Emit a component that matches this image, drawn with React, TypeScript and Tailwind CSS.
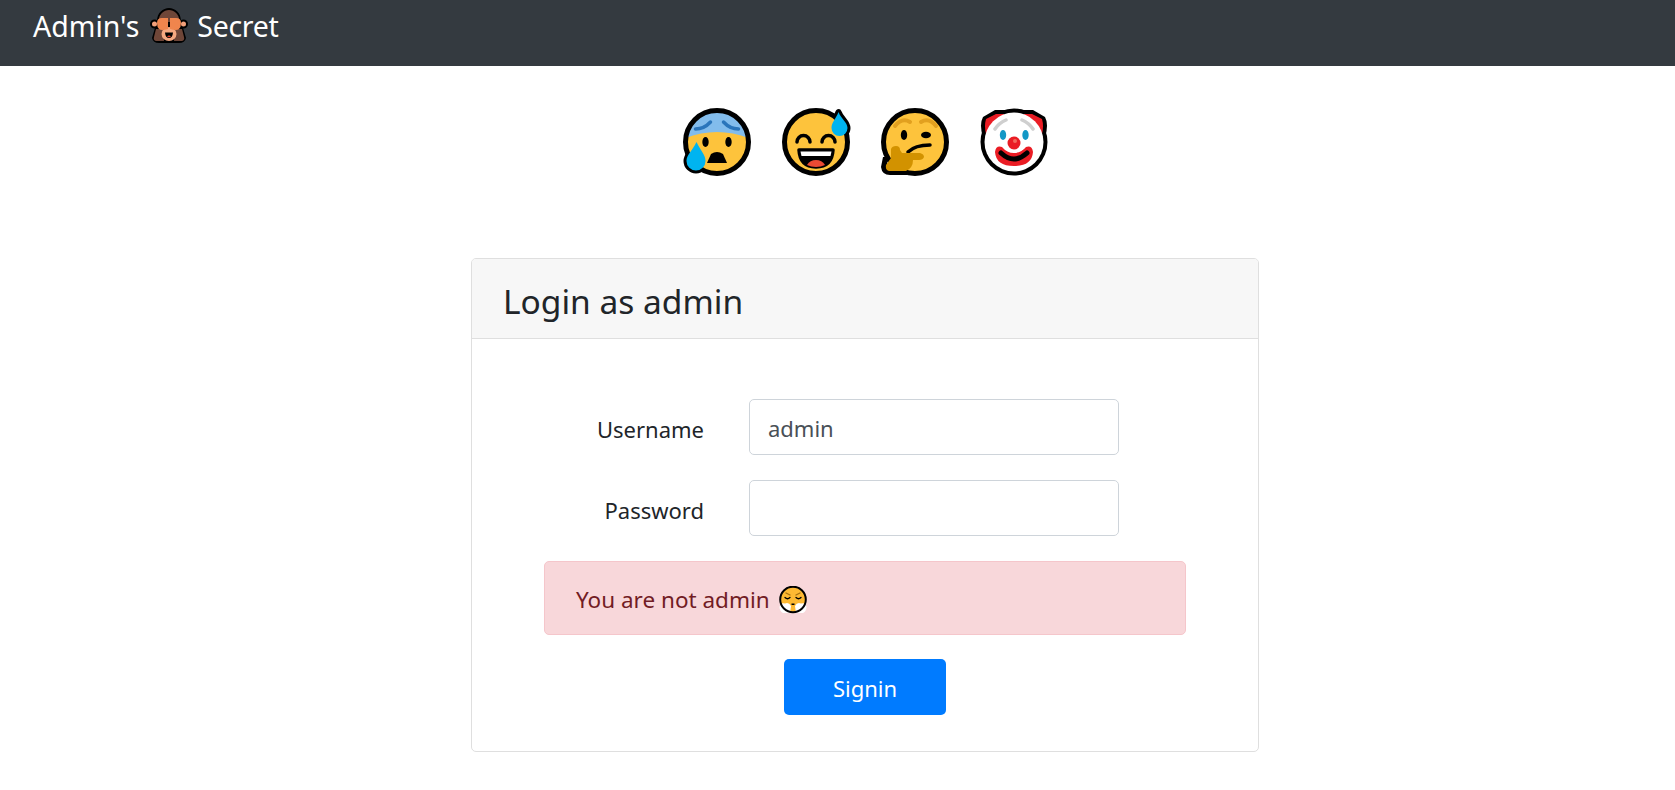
const FACE = "#fdc33c";
const DROP = "#00b4f0";

function ColdSweat() {
  const drop = "M19.500 40C15 49 9.500 53 9.500 59A9.500 9.500 0 0 0 28.500 59C28.500 53 24 49 19.500 40Z";
  return (
    <svg width="80" height="80" viewBox="0 0 80 80" className="shrink-0">
      <defs>
        <clipPath id="cold-face">
          <circle cx="40" cy="40" r="31.500" />
        </clipPath>
        <clipPath id="cold-outside">
          <path clipRule="evenodd" d="M0 0H80V80H0Z M8.500 40A31.500 31.500 0 0 0 71.500 40A31.500 31.500 0 0 0 8.500 40Z" />
        </clipPath>
      </defs>
      <circle cx="40" cy="40" r="31.500" fill={FACE} />
      <g clipPath="url(#cold-face)">
        <path d="M6 6H74V37Q40 23 6 37Z" fill="#82bcec" />
      </g>
      <circle cx="40" cy="40" r="31.500" fill="none" stroke="#000" strokeWidth="5" />
      <path d="M18.500 27Q27 27 33.500 20M61.500 27Q53 27 46.500 20" fill="none" stroke="#2a75bb" strokeWidth="3.500" strokeLinecap="round" />
      <ellipse cx="28.500" cy="40" rx="3.200" ry="5" fill="#000" />
      <ellipse cx="51.500" cy="40" rx="3.200" ry="5" fill="#000" />
      <path d="M30 61L34 52Q40 48 46 52L50 61Z" fill="#000" />
      <g clipPath="url(#cold-outside)">
        <path d={drop} fill="#000" stroke="#000" strokeWidth="6" strokeLinejoin="round" />
      </g>
      <path d={drop} fill={DROP} />
    </svg>
  );
}

function SweatSmile() {
  const drop = "M62.500 10C60 17 55.500 20 55.500 26A8 8 0 0 0 71.500 26C71.500 20 65 17 62.500 10Z";
  return (
    <svg width="80" height="80" viewBox="0 0 80 80" className="shrink-0">
      <defs>
        <clipPath id="sweat-outside">
          <path clipRule="evenodd" d="M0 0H80V80H0Z M8.500 40A31.500 31.500 0 0 0 71.500 40A31.500 31.500 0 0 0 8.500 40Z" />
        </clipPath>
      </defs>
      <circle cx="40" cy="40" r="31.500" fill={FACE} stroke="#000" strokeWidth="5" />
      <path d="M21 40A6.500 6.500 0 0 1 34 40M46 40A6.500 6.500 0 0 1 59 40" fill="none" stroke="#000" strokeWidth="3.500" strokeLinecap="round" />
      <path d="M23 48H57Q56 65 40 65Q24 65 23 48Z" fill="#000" stroke="#000" strokeWidth="3.500" strokeLinejoin="round" />
      <path d="M24.500 49.500H55.500L54.500 54H25.500Z" fill="#fff" />
      <path d="M31 63Q34 58 40 58Q46 58 49 63Q45 65 40 65Q35 65 31 63Z" fill="#ea4a34" />
      <g clipPath="url(#sweat-outside)">
        <path d={drop} fill="#000" stroke="#000" strokeWidth="6" strokeLinejoin="round" />
      </g>
      <path d={drop} fill={DROP} />
    </svg>
  );
}

function Thinking() {
  return (
    <svg width="80" height="80" viewBox="0 0 80 80" className="shrink-0">
      <circle cx="40" cy="40" r="31.500" fill={FACE} stroke="#000" strokeWidth="5" />
      <path d="M20 24Q27 15 35 20M46 20Q54 15 61 24" fill="none" stroke="#e2a01f" strokeWidth="4" strokeLinecap="round" />
      <ellipse cx="29" cy="33" rx="3.200" ry="5" fill="#000" />
      <ellipse cx="51" cy="33" rx="5" ry="3.200" fill="#000" />
      <path d="M33 50Q40 43 55 43" fill="none" stroke="#000" strokeWidth="3.500" strokeLinecap="round" />
      <path d="M8 55L6 65Q7 73 15 73H32V68H14Q11 68 12 64L13 55Z" fill="#000" />
      <path d="M16 47Q17 44 21 44Q25 44 25 48L27 51H45Q49 52 49 55Q48 58 44 58H38Q38 66 31 69H14Q10 68 11 63L16 56Z" fill="#d29200" />
    </svg>
  );
}

function Clown() {
  return (
    <svg width="80" height="80" viewBox="0 0 80 80" className="shrink-0">
      <circle cx="40" cy="40" r="33.500" fill="#000" />
      <path d="M21 8H59L71 15Q75 22 71 36H9Q5 22 9 15Z" fill="#000" />
      <path d="M22 12L12 17Q10 24 12 32H30V12Z M58 12L68 17Q70 24 68 32H50V12Z" fill="#ea1c24" />
      <circle cx="40" cy="40" r="29.500" fill="#fff" />
      <path d="M21 27Q25 21 32 18M59 27Q55 21 48 18" fill="none" stroke="#cfcfcf" strokeWidth="3.500" strokeLinecap="round" />
      <ellipse cx="29" cy="33" rx="3.200" ry="5" fill="#1398c6" />
      <ellipse cx="51.500" cy="33" rx="3.200" ry="5" fill="#1398c6" />
      <circle cx="40" cy="41" r="6.500" fill="#ea1c24" />
      <circle cx="41" cy="39" r="2" fill="#f2695c" />
      <path d="M21 50Q22 43 28 45Q33 51 40 51Q47 51 52 45Q58 43 59 50Q58 64 40 64Q22 64 21 50Z" fill="#ea1c24" />
      <path d="M27 51Q40 63 53 51" fill="none" stroke="#000" strokeWidth="5" strokeLinecap="round" />
    </svg>
  );
}

function SeeNoEvil() {
  return (
    <svg width="38" height="38" viewBox="0 0 38 38" className="ml-[11px] mr-[9px] shrink-0">
      <path d="M7 14C7 6 13 1 19 1C25 1 31 6 31 14L36 31Q35 36 29 36H9Q3 36 2 31Z" fill="#000" />
      <circle cx="4.500" cy="17" r="3.500" fill="#f3a07a" stroke="#000" strokeWidth="2" />
      <circle cx="33.500" cy="17" r="3.500" fill="#f3a07a" stroke="#000" strokeWidth="2" />
      <path d="M8.500 15C8.500 7 14 3 19 3C24 3 29.500 7 29.500 15Z" fill="#6f4638" />
      <path d="M6 22H13L14 34H6Q3 33 4 30Z M32 22H25L24 34H32Q35 33 34 30Z" fill="#6f4638" />
      <ellipse cx="19" cy="27" rx="7.500" ry="7" fill="#f5a881" />
      <path d="M15 25.500H23Q22.500 31 19 31Q15.500 31 15 25.500Z" fill="#000" />
      <path d="M17 29.500Q19 27.500 21 29.500Q19 31 17 29.500Z" fill="#e8402e" />
      <path d="M7 16Q7 11 12 11H18V22Q11 24 9 22Q7 20 7 16Z M31 16Q31 11 26 11H20V22Q27 24 29 22Q31 20 31 16Z" fill="#f0854d" />
    </svg>
  );
}

function Triumph() {
  return (
    <svg width="30" height="28" viewBox="0 0 30 28" className="ml-[8px] shrink-0">
      <circle cx="15" cy="13.500" r="12.800" fill="#fdb933" />
      <path d="M8 7L12 9M22 7L18 9" stroke="#a56f10" strokeWidth="1.300" strokeLinecap="round" />
      <path d="M7 11.500Q9.500 14 12 11.500M18 11.500Q20.500 14 23 11.500" fill="none" stroke="#000" strokeWidth="1.300" strokeLinecap="round" />
      <path d="M13.500 17.500H16.500V19H13.500Z" fill="#000" />
      <path d="M1.500 21Q2.500 16 7 17.500Q11 16 13 20L12 27H5Q1.500 25 1.500 21Z" fill="#fff" />
      <path d="M28.500 21Q27.500 16 23 17.500Q19 16 17 20L18 27H25Q28.500 25 28.500 21Z" fill="#fff" />
      <circle cx="15" cy="13.500" r="12.800" fill="none" stroke="#000" strokeWidth="2" />
    </svg>
  );
}

export default function App() {
  return (
    <div className="min-h-[790px] bg-white font-['Noto_Sans','Open_Sans',sans-serif] text-[#212529]">
      <nav className="flex h-[66px] items-start bg-[#343a40] pl-[33px] pt-[6px] text-[28.500px] leading-[40px] text-white">
        <span className="flex items-center">
          Admin's
          <SeeNoEvil />
          <span className="tracking-[-0.3px]">Secret</span>
        </span>
      </nav>

      <div className="ml-[677px] mt-[36px] flex gap-[19px]">
        <ColdSweat />
        <SweatSmile />
        <Thinking />
        <Clown />
      </div>

      <div className="ml-[471px] mt-[76px] w-[788px] overflow-hidden rounded-[5px] border border-[#dfdfdf]">
        <div className="flex h-[80px] items-center border-b border-[#dfdfdf] bg-[#f7f7f7] pl-[31px] pt-[5px] text-[33.500px]">
          Login as admin
        </div>
        <div className="flex h-[412px] flex-col pt-[60px]">
          <div className="flex items-center">
            <label className="w-[232px] pt-[4px] text-right text-[22px]">Username</label>
            <div className="ml-[45px] flex h-[56px] w-[370px] items-center rounded-[5px] border border-[#ced4da] px-[18px] pt-[2px] text-[22px] text-[#495057]">
              admin
            </div>
          </div>
          <div className="mt-[25px] flex items-center">
            <label className="w-[232px] pt-[4px] text-right text-[22px]">Password</label>
            <div className="ml-[45px] h-[56px] w-[370px] rounded-[5px] border border-[#ced4da]" />
          </div>
          <div className="ml-[72px] mt-[25px] flex h-[74px] w-[642px] items-center rounded-[5px] border border-[#f5c6cb] bg-[#f8d7da] pl-[31px] pt-[3px] text-[22.500px] text-[#721c24]">
            You are not admin
            <Triumph />
          </div>
          <button className="ml-[312px] mt-[24px] h-[56px] w-[162px] rounded-[5px] bg-[#007bff] pt-[2px] text-[22px] text-white">
            Signin
          </button>
        </div>
      </div>
    </div>
  );
}
